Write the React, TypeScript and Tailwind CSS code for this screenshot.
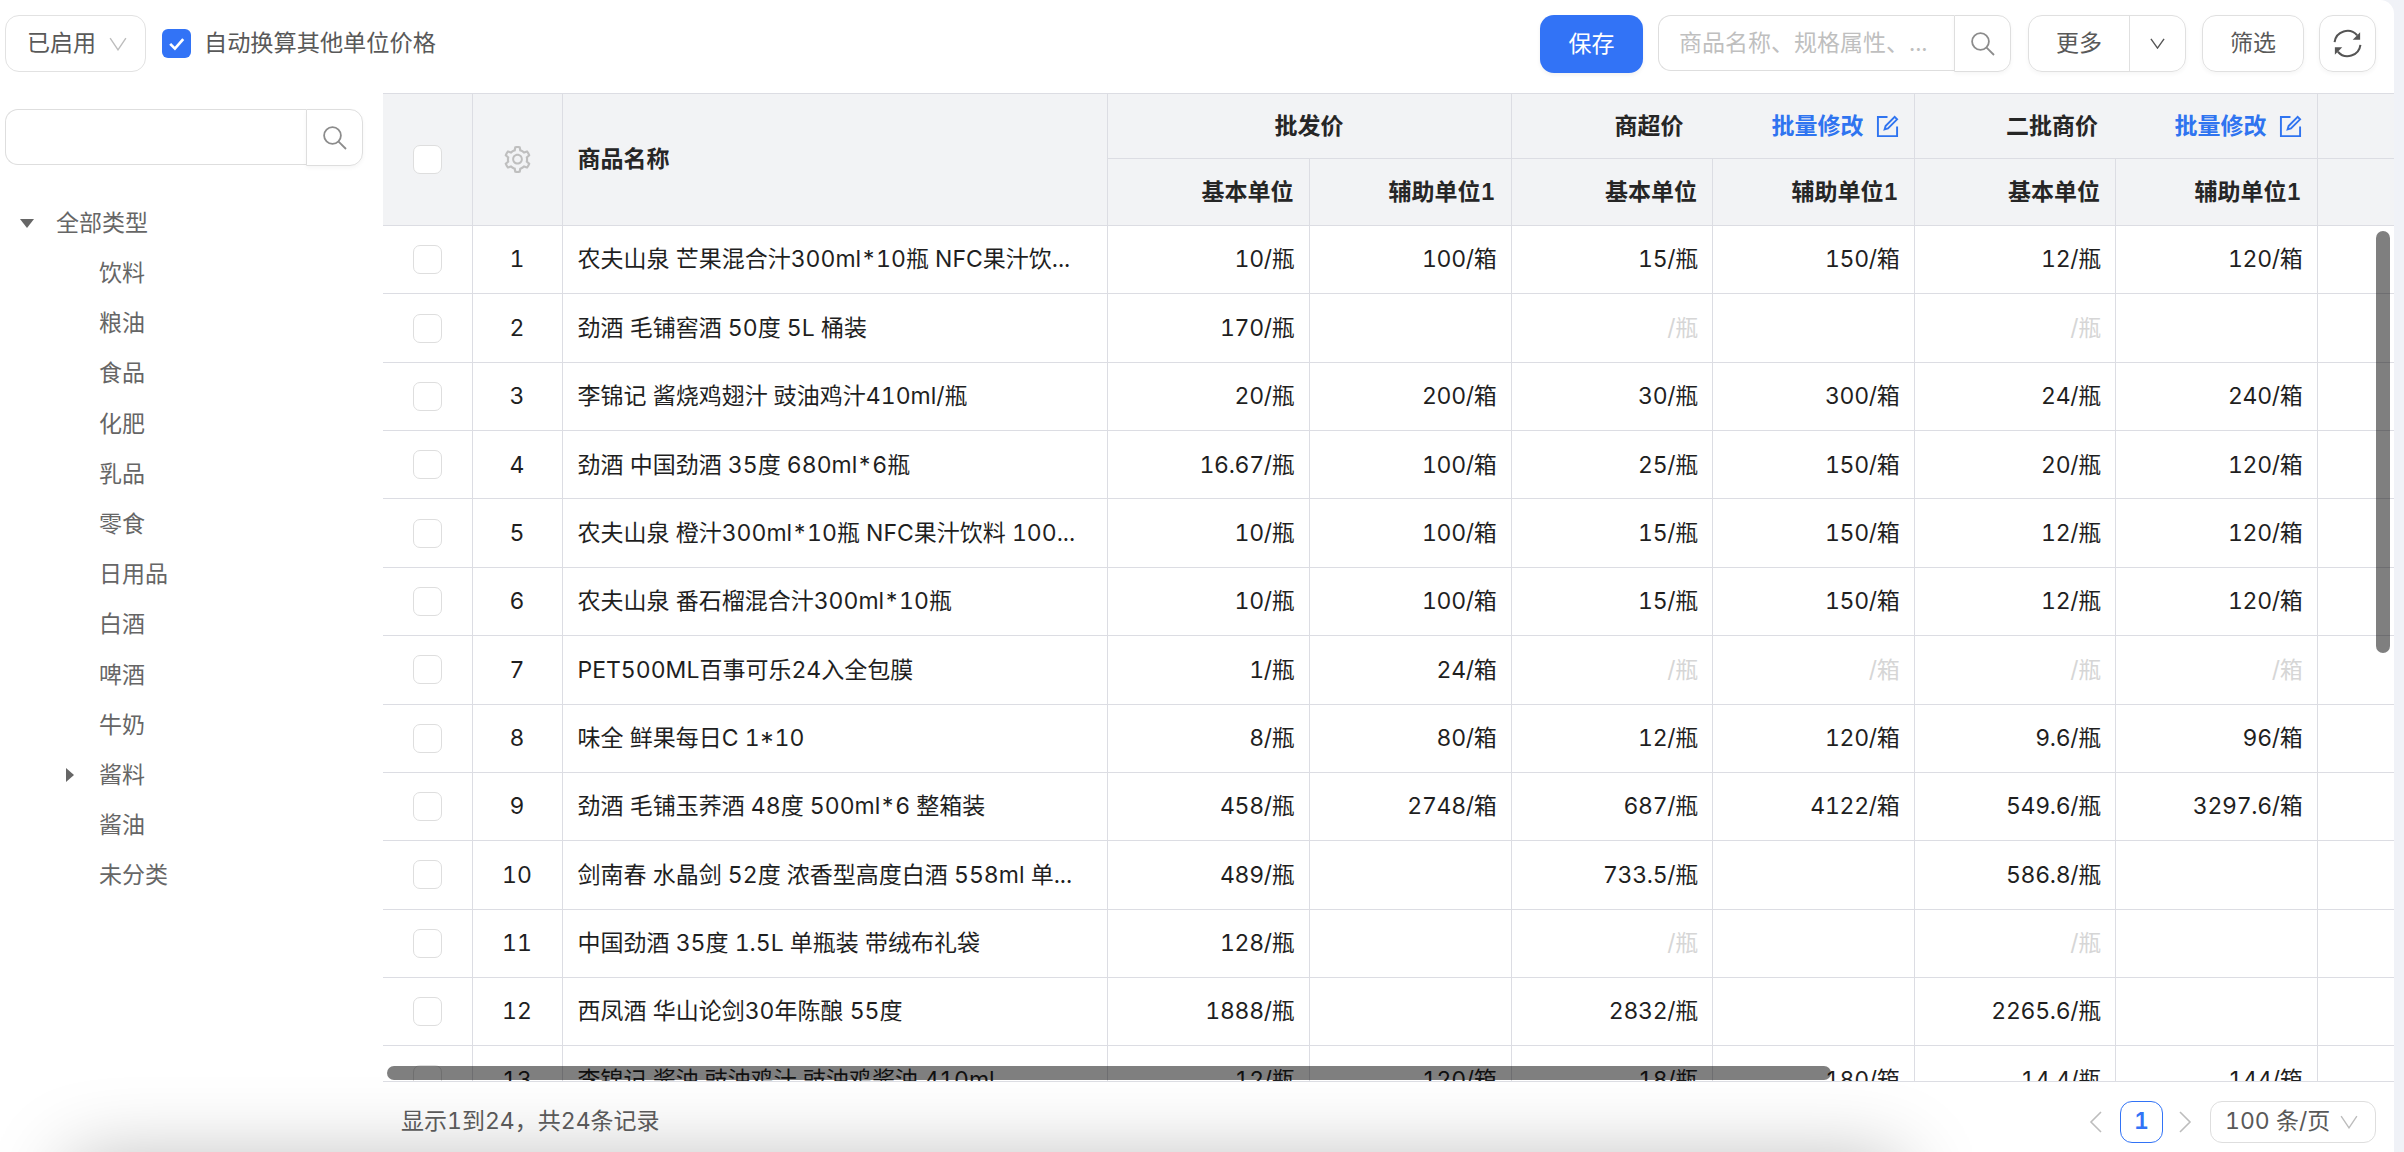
import { AiOutlineSetting } from "react-icons/ai";

const treeItems = ["饮料", "粮油", "食品", "化肥", "乳品", "零食", "日用品", "白酒", "啤酒", "牛奶", "酱料", "酱油", "未分类"];

const rows = [
  ["农夫山泉 芒果混合汁300ml*10瓶 NFC果汁饮...", "10/瓶", "100/箱", "15/瓶", "150/箱", "12/瓶", "120/箱"],
  ["劲酒 毛铺窖酒 50度 5L 桶装", "170/瓶", "", "/瓶", "", "/瓶", ""],
  ["李锦记 酱烧鸡翅汁 豉油鸡汁410ml/瓶", "20/瓶", "200/箱", "30/瓶", "300/箱", "24/瓶", "240/箱"],
  ["劲酒 中国劲酒 35度 680ml*6瓶", "16.67/瓶", "100/箱", "25/瓶", "150/箱", "20/瓶", "120/箱"],
  ["农夫山泉 橙汁300ml*10瓶 NFC果汁饮料 100...", "10/瓶", "100/箱", "15/瓶", "150/箱", "12/瓶", "120/箱"],
  ["农夫山泉 番石榴混合汁300ml*10瓶", "10/瓶", "100/箱", "15/瓶", "150/箱", "12/瓶", "120/箱"],
  ["PET500ML百事可乐24入全包膜", "1/瓶", "24/箱", "/瓶", "/箱", "/瓶", "/箱"],
  ["味全 鲜果每日C 1*10", "8/瓶", "80/箱", "12/瓶", "120/箱", "9.6/瓶", "96/箱"],
  ["劲酒 毛铺玉荞酒 48度 500ml*6 整箱装", "458/瓶", "2748/箱", "687/瓶", "4122/箱", "549.6/瓶", "3297.6/箱"],
  ["剑南春 水晶剑 52度 浓香型高度白酒 558ml 单...", "489/瓶", "", "733.5/瓶", "", "586.8/瓶", ""],
  ["中国劲酒 35度 1.5L 单瓶装 带绒布礼袋", "128/瓶", "", "/瓶", "", "/瓶", ""],
  ["西凤酒 华山论剑30年陈酿 55度", "1888/瓶", "", "2832/瓶", "", "2265.6/瓶", ""],
  ["李锦记 酱油 豉油鸡汁 豉油鸡酱油 410ml", "12/瓶", "120/箱", "18/瓶", "180/箱", "14.4/瓶", "144/箱"],
];

function Chevron({ w, h, className }: { w: number; h: number; className: string }) {
  return (
    <svg width={w} height={h} viewBox="0 0 16 12" preserveAspectRatio="none" fill="none" className={className}>
      <path d="M1 1 8 11 15 1" stroke="currentColor" strokeWidth="1.4" vectorEffect="non-scaling-stroke" />
    </svg>
  );
}

function RowCheckbox() {
  return <span className="block mx-auto w-[29px] h-[29px] rounded-[7px] border border-[#dedede] bg-white" />;
}

function BatchLink() {
  return (
    <span className="flex items-center text-[#2f74f0] font-semibold">
      批量修改
      <svg width="23" height="23" viewBox="0 0 24 24" fill="none" stroke="currentColor" strokeWidth="2" className="ml-[12px]">
        <path d="M12 2H2v20h20V12" />
        <path d="M19.5 2 22 4.5 12.5 14l-3.5 1 1-3.5z" />
      </svg>
    </span>
  );
}

function SearchBox({ placeholder, inputWidth }: { placeholder?: string; inputWidth: string }) {
  return (
    <div className="flex items-start">
      <input
        placeholder={placeholder}
        className={`${inputWidth} h-[56px] px-[20px] border border-r-0 border-[#dedede] rounded-l-[13px] outline-none text-[23px] placeholder:text-[#bfbfbf]`}
      />
      <button className="flex items-center justify-center w-[57px] h-[57px] border border-[#dedede] rounded-r-[13px] text-[#8c8c8c] shadow-[0_2px_4px_rgba(0,0,0,0.04)]">
        <svg width="24" height="24" viewBox="0 0 24 24" fill="none" stroke="currentColor" strokeWidth="1.8">
          <circle cx="9.5" cy="9.5" r="8.4" />
          <path d="M15.6 15.6 23 23" />
        </svg>
      </button>
    </div>
  );
}

function PriceCell({ value }: { value: string }) {
  const muted = value.startsWith("/");
  return (
    <td className={`border-b border-r border-[#dcdde3] pr-[14px] text-right tracking-[-0.3px] ${muted ? "text-[#d6d6d6]" : ""}`}>{value}</td>
  );
}

export default function App() {
  return (
    <div className="w-[2404px] h-[1152px] overflow-hidden bg-[#f0f2f7] font-['Inter','Noto_Sans_CJK_SC',sans-serif] text-[23px] tabular-nums text-[#1f1f1f]">
      <div className="relative w-[2394px] h-full bg-white rounded-tr-[14px] overflow-hidden">
        {/* soft shadow that bleeds up from the bottom edge */}
        <div className="absolute left-[70px] top-[1160px] w-[1830px] h-[100px] shadow-[0_0_80px_0_rgba(0,0,0,0.28)]" />

        <div className="relative flex flex-col h-full">
          <header className="flex items-start h-[93px] pt-[15px] pl-[5px] pr-[18px]">
            <button className="flex items-center w-[141px] h-[57px] pl-[21px] border border-[#e2e2e2] rounded-[14px] text-[#595959]">
              已启用
              <Chevron w={18} h={14} className="ml-[13px] text-[#bdbdbd]" />
            </button>
            <label className="flex items-center h-[57px] ml-[16px] text-[#595959]">
              <span className="flex items-center justify-center w-[29px] h-[29px] rounded-[6px] bg-[#3273f6]">
                <svg width="19" height="19" viewBox="0 0 24 24" fill="none" stroke="white" strokeWidth="3.4">
                  <path d="M4 12.5 10 18.5 20.5 6.5" />
                </svg>
              </span>
              <span className="ml-[13px] text-[23.2px]">自动换算其他单位价格</span>
            </label>
            <button className="ml-auto w-[103px] h-[58px] rounded-[14px] bg-[#3273f6] text-white shadow-[0_2px_4px_rgba(0,0,0,0.06)]">
              保存
            </button>
            <div className="ml-[15px]">
              <SearchBox placeholder="商品名称、规格属性、..." inputWidth="w-[296px]" />
            </div>
            <div className="flex ml-[17px] h-[57px] border border-[#e0e0e0] rounded-[14px] text-[#595959] shadow-[0_2px_4px_rgba(0,0,0,0.04)]">
              <button className="w-[101px] border-r border-[#e0e0e0]">更多</button>
              <button className="flex items-center justify-center w-[55px]">
                <Chevron w={15} h={11} className="text-[#555555]" />
              </button>
            </div>
            <button className="ml-[16px] w-[102px] h-[57px] border border-[#e0e0e0] rounded-[14px] text-[#595959] shadow-[0_2px_4px_rgba(0,0,0,0.04)]">
              筛选
            </button>
            <button className="flex items-center justify-center ml-[15px] w-[57px] h-[57px] border border-[#e0e0e0] rounded-[14px] text-[#555555] shadow-[0_2px_4px_rgba(0,0,0,0.04)]">
              <svg width="33" height="33" viewBox="0 0 24 24" fill="none">
                <path d="M2.6 11A9.4 9.4 0 0 1 19 6" stroke="currentColor" strokeWidth="1.5" />
                <path d="M21.2 3.8v5.4h-5.4z" fill="currentColor" />
                <path d="M21.4 13A9.4 9.4 0 0 1 5 18" stroke="currentColor" strokeWidth="1.5" />
                <path d="M2.8 20.2v-5.4h5.4z" fill="currentColor" />
              </svg>
            </button>
          </header>

          <div className="flex flex-1 min-h-0">
            <aside className="w-[383px] shrink-0 pt-[16px] pl-[5px]">
              <SearchBox inputWidth="w-[301px]" />
              <div className="mt-[32px] text-[#666666]">
                <div className="flex items-center h-[50.2px] pl-[15px]">
                  <span className="w-[36px]">
                    <span className="block w-0 h-0 border-x-[7px] border-x-transparent border-t-[9px] border-t-[#666666]" />
                  </span>
                  全部类型
                </div>
                {treeItems.map((item) => (
                  <div key={item} className="flex items-center h-[50.2px] pl-[61px]">
                    <span className="w-[33px]">
                      {item === "酱料" && (
                        <span className="block w-0 h-0 border-y-[7px] border-y-transparent border-l-[8px] border-l-[#666666]" />
                      )}
                    </span>
                    {item}
                  </div>
                ))}
              </div>
            </aside>

            <main className="relative flex-1 min-w-0">
              <div className="relative h-[989px] overflow-hidden bg-white border-b border-[#dcdde3]">
                <table className="table-fixed w-[2011px] border-separate border-spacing-0">
                  <colgroup>
                    <col className="w-[89.5px]" />
                    <col className="w-[90px]" />
                    <col className="w-[545px]" />
                    <col className="w-[202px]" />
                    <col className="w-[202px]" />
                    <col className="w-[201.5px]" />
                    <col className="w-[201.5px]" />
                    <col className="w-[201.5px]" />
                    <col className="w-[201.5px]" />
                    <col />
                  </colgroup>
                  <thead className="bg-[#f2f3f5] font-semibold text-[#262626]">
                    <tr className="h-[66px]">
                      <th rowSpan={2} className="border-t border-b border-r border-[#dcdde3]">
                        <RowCheckbox />
                      </th>
                      <th rowSpan={2} className="border-t border-b border-r border-[#dcdde3]">
                        <AiOutlineSetting className="mx-auto text-[#bfbfbf]" size={31} />
                      </th>
                      <th rowSpan={2} className="border-t border-b border-r border-[#dcdde3] pl-[15px] text-left font-semibold">
                        商品名称
                      </th>
                      <th colSpan={2} className="border-t border-b border-r border-[#dcdde3] text-center font-semibold">
                        批发价
                      </th>
                      <th colSpan={2} className="border-t border-b border-r border-[#dcdde3] px-[15px] font-semibold">
                        <div className="flex items-center">
                          <span className="flex-1 text-center">商超价</span>
                          <BatchLink />
                        </div>
                      </th>
                      <th colSpan={2} className="border-t border-b border-r border-[#dcdde3] px-[15px] font-semibold">
                        <div className="flex items-center">
                          <span className="flex-1 text-center">二批商价</span>
                          <BatchLink />
                        </div>
                      </th>
                      <th className="border-t border-b border-[#dcdde3]" />
                    </tr>
                    <tr className="h-[67px]">
                      {["基本单位", "辅助单位1", "基本单位", "辅助单位1", "基本单位", "辅助单位1"].map((label, i) => (
                        <th key={i} className="border-b border-r border-[#dcdde3] pr-[15px] text-right font-semibold">
                          {label}
                        </th>
                      ))}
                      <th className="border-b border-[#dcdde3]" />
                    </tr>
                  </thead>
                  <tbody>
                    {rows.map((row, i) => (
                      <tr key={i} className="h-[68.36px]">
                        <td className="border-b border-r border-[#dcdde3]">
                          <RowCheckbox />
                        </td>
                        <td className="border-b border-r border-[#dcdde3] text-center">{i + 1}</td>
                        <td className="border-b border-r border-[#dcdde3] pl-[15px] pr-[15px] truncate">{row[0]}</td>
                        {row.slice(1).map((value, j) => (
                          <PriceCell key={j} value={value} />
                        ))}
                        <td className="border-b border-[#dcdde3]" />
                      </tr>
                    ))}
                  </tbody>
                </table>
              </div>

              <footer className="flex items-center h-[70px] pl-[18px] pr-[18px] pt-[9px]">
                <span className="text-[#595959]">显示1到24，共24条记录</span>
                <div className="ml-auto flex items-center">
                  <svg width="14" height="24" viewBox="0 0 14 24" fill="none" stroke="#bdbdbd" strokeWidth="1.6">
                    <path d="M12 2 2 12l10 10" />
                  </svg>
                  <span className="flex items-center justify-center ml-[17px] w-[43px] h-[42px] rounded-[12px] border border-[#3273f6] text-[#3273f6] font-semibold">
                    1
                  </span>
                  <svg width="14" height="24" viewBox="0 0 14 24" fill="none" stroke="#bdbdbd" strokeWidth="1.6" className="ml-[15px]">
                    <path d="m2 2 10 10L2 22" />
                  </svg>
                  <button className="flex items-center ml-[18px] w-[166px] h-[42px] pl-[14px] border border-[#dedede] rounded-[12px] text-[#595959]">
                    100 条/页
                    <Chevron w={18} h={14} className="ml-[10px] text-[#bdbdbd]" />
                  </button>
                </div>
              </footer>

              {/* overlay scrollbars */}
              <div className="absolute left-[1993px] top-[138px] w-[14px] h-[422px] rounded-full bg-black/50" />
              <div className="absolute left-[4px] top-[973px] w-[1444px] h-[14px] rounded-full bg-black/50" />
            </main>
          </div>
        </div>
      </div>
    </div>
  );
}
